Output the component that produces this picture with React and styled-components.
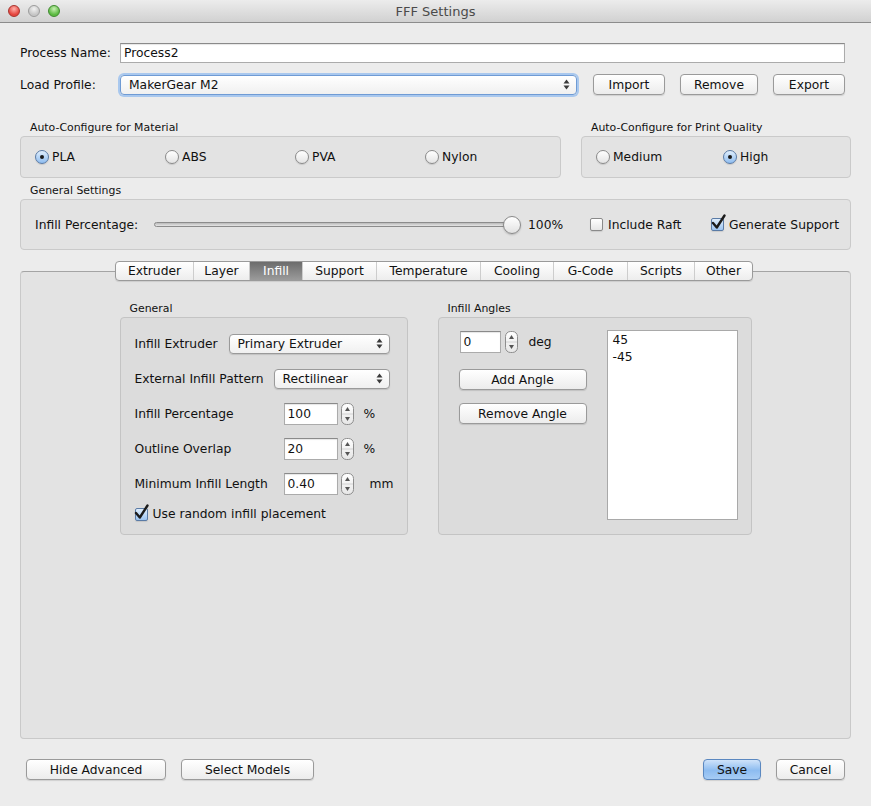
import styled, { createGlobalStyle } from 'styled-components';

const GlobalStyle = createGlobalStyle`
  html, body {
    margin: 0;
    padding: 0;
    background: #ececec;
  }
  body {
    font-family: "DejaVu Sans", "Noto Sans", sans-serif;
    font-size: 12.3px;
    color: #111;
  }
  * {
    box-sizing: border-box;
  }
`;

const materials = ['PLA', 'ABS', 'PVA', 'Nylon'];
const qualities = ['Medium', 'High'];
const tabs = [
  ['Extruder', 77],
  ['Layer', 56],
  ['Infill', 53],
  ['Support', 74],
  ['Temperature', 104],
  ['Cooling', 73],
  ['G-Code', 74],
  ['Scripts', 67],
  ['Other', 58],
];

const PopArrows = () => (
  <svg width="7" height="11" viewBox="0 0 7 11">
    <polygon points="0.5,4.5 3.5,0.5 6.5,4.5" fill="#3a3a3a" />
    <polygon points="0.5,6.5 3.5,10.5 6.5,6.5" fill="#3a3a3a" />
  </svg>
);

const StepperIcon = () => (
  <svg width="13" height="22" viewBox="0 0 13 22">
    <defs>
      <linearGradient id="stp" x1="0" y1="0" x2="0" y2="1">
        <stop offset="0" stopColor="#ffffff" />
        <stop offset="1" stopColor="#e6e6e6" />
      </linearGradient>
    </defs>
    <rect x="0.5" y="0.5" width="12" height="21" rx="5" fill="url(#stp)" stroke="#8e8e8e" />
    <line x1="1" y1="11" x2="12" y2="11" stroke="#d2d2d2" />
    <polygon points="4,8 6.5,4 9,8" fill="#555" />
    <polygon points="4,14 6.5,18 9,14" fill="#555" />
  </svg>
);

const CheckMark = () => (
  <svg width="18" height="18" viewBox="0 0 18 18">
    <path d="M3 9 L6.8 13.5 L14.5 1.5" fill="none" stroke="#1b1b1b" strokeWidth="2.4" strokeLinecap="round" strokeLinejoin="round" />
  </svg>
);

const Window = styled.div`
  width: 871px;
  height: 806px;
  background: #ececec;
  display: flex;
  flex-direction: column;
  overflow: hidden;
`;

const TitleBar = styled.div`
  height: 23px;
  display: grid;
  grid-template-columns: 1fr auto 1fr;
  align-items: center;
  background: linear-gradient(#ececec, #d1d1d1);
  border-bottom: 1px solid #8c8c8c;
`;

const Lights = styled.div`
  display: flex;
  gap: 8px;
  padding-left: 8px;
`;

const lightColors = {
  red: ['#ffb1aa', '#e5463f', '#a8322c'],
  gray: ['#f2f2f2', '#c6c6c6', '#9c9c9c'],
  green: ['#c9f0b4', '#5dbb43', '#3e8a2e'],
};

const Light = styled.span`
  width: 12px;
  height: 12px;
  border-radius: 50%;
  background: radial-gradient(circle at 50% 30%, ${p => lightColors[p.$c][0]}, ${p => lightColors[p.$c][1]} 65%);
  border: 1px solid ${p => lightColors[p.$c][2]};
`;

const Title = styled.div`
  font-size: 13px;
  color: #4a4a4a;
`;

const Body = styled.div`
  flex: 1;
  display: flex;
  flex-direction: column;
  padding: 0 20px;
`;

const FieldRow = styled.div`
  display: flex;
  align-items: center;
  height: ${p => p.$h}px;
  margin-top: ${p => p.$top}px;
  margin-right: 6px;
`;

const FieldLabel = styled.div`
  width: 100px;
  flex-shrink: 0;
`;

const TextField = styled.div`
  flex: ${p => (p.$w ? 'none' : 1)};
  width: ${p => (p.$w ? `${p.$w}px` : 'auto')};
  height: ${p => p.$h || 20}px;
  background: #fff;
  border: 1px solid #ababab;
  border-top-color: #8a8a8a;
  box-shadow: inset 0 1px 1px rgba(0, 0, 0, 0.1);
  padding: 0 3px;
  display: flex;
  align-items: center;
`;

const PopUp = styled.div`
  width: ${p => p.$w}px;
  height: 20px;
  flex-shrink: 0;
  display: flex;
  align-items: center;
  justify-content: space-between;
  padding: 0 6px 0 8px;
  border-radius: 4px;
  background: linear-gradient(#ffffff, #f0f0f0);
  border: 1px solid ${p => (p.$focused ? '#6f9bd4' : '#9a9a9a')};
  box-shadow: ${p => (p.$focused ? '0 0 0 2px #a9c8ee' : '0 1px 1px rgba(0, 0, 0, 0.12)')};
`;

const ButtonGroup = styled.div`
  display: flex;
  gap: 15px;
  margin-left: ${p => p.$left || 0}px;
`;

const PushButton = styled.div`
  width: ${p => p.$w}px;
  height: 21px;
  flex-shrink: 0;
  display: flex;
  align-items: center;
  justify-content: center;
  border-radius: 4px;
  border: 1px solid ${p => (p.$primary ? '#5b88c0' : '#9a9a9a')};
  background: ${p => (p.$primary ? 'linear-gradient(#cfe3fa, #8dbcf0 55%, #a6ccf5)' : 'linear-gradient(#ffffff, #ececec)')};
  box-shadow: 0 1px 1px rgba(0, 0, 0, 0.12);
`;

const GroupLabel = styled.div`
  font-size: 10.9px;
  line-height: 14px;
  padding-left: 10px;
  margin-top: ${p => p.$top || 0}px;
  margin-bottom: 1px;
`;

const GroupsRow = styled.div`
  display: flex;
  gap: 20px;
`;

const Group = styled.div`
  display: flex;
  flex-direction: column;
  width: ${p => (p.$w ? `${p.$w}px` : 'auto')};
  flex: ${p => (p.$w ? 'none' : 1)};
`;

const GroupBox = styled.div`
  height: ${p => p.$h}px;
  background: #e3e3e3;
  border: 1px solid #cacaca;
  border-radius: 4px;
  display: flex;
  align-items: center;
  padding-left: 14px;
`;

const RadioSet = styled.div`
  display: grid;
  grid-template-columns: repeat(${p => p.$n}, ${p => p.$step}px);
`;

const Choice = styled.div`
  display: flex;
  align-items: center;
  gap: ${p => p.$gap || 3}px;
  width: ${p => (p.$w ? `${p.$w}px` : 'auto')};
`;

const Radio = styled.span`
  width: 14px;
  height: 14px;
  border-radius: 50%;
  display: flex;
  align-items: center;
  justify-content: center;
  border: 1px solid ${p => (p.$on ? '#5a7ba6' : '#8a8a8a')};
  background: ${p => (p.$on ? 'linear-gradient(#e0eefc, #8fbdf0)' : 'linear-gradient(#ffffff, #e4e4e4)')};
  box-shadow: 0 1px 1px rgba(0, 0, 0, 0.12);
  &::after {
    content: '';
    width: 4px;
    height: 4px;
    border-radius: 50%;
    background: ${p => (p.$on ? '#1a1a1a' : 'transparent')};
  }
`;

const CheckBox = styled.span`
  width: 13px;
  height: 13px;
  flex-shrink: 0;
  border-radius: 2px;
  border: 1px solid ${p => (p.$on ? '#5a7ba6' : '#8a8a8a')};
  background: ${p => (p.$on ? 'linear-gradient(#e0eefc, #9cc4f1)' : 'linear-gradient(#ffffff, #e6e6e6)')};
  box-shadow: 0 1px 1px rgba(0, 0, 0, 0.1);
  display: flex;
  align-items: flex-end;
  justify-content: center;
  overflow: visible;
  svg {
    margin-bottom: -2px;
    margin-left: 2px;
    flex-shrink: 0;
  }
`;

const SliderLabel = styled.div`
  width: 119px;
  flex-shrink: 0;
`;

const Slider = styled.div`
  width: 367px;
  display: flex;
  align-items: center;
`;

const SliderTrack = styled.div`
  flex: 1;
  height: 5px;
  border-radius: 3px;
  border: 1px solid #8c8c8c;
  background: linear-gradient(#b9b9b9, #e6e6e6);
`;

const SliderThumb = styled.div`
  width: 18px;
  height: 18px;
  margin-left: -12px;
  border-radius: 50%;
  border: 1px solid #8a8a8a;
  background: linear-gradient(#ffffff, #e2e2e2);
  box-shadow: 0 1px 2px rgba(0, 0, 0, 0.2);
`;

const SliderValue = styled.div`
  width: 62px;
  margin-left: 7px;
`;

const TabArea = styled.div`
  margin-top: 11px;
  display: flex;
  flex-direction: column;
`;

const TabBar = styled.div`
  align-self: center;
  display: flex;
  height: 20px;
  margin-bottom: -10px;
  margin-left: -3px;
  position: relative;
  z-index: 1;
  border: 1px solid #9a9a9a;
  border-radius: 4px;
  background: linear-gradient(#ffffff, #ededed);
  overflow: hidden;
  box-shadow: 0 1px 1px rgba(0, 0, 0, 0.1);
`;

const Tab = styled.div`
  width: ${p => p.$w}px;
  text-align: center;
  line-height: 18px;
  border-left: 1px solid #cdcdcd;
  color: ${p => (p.$active ? '#fff' : '#111')};
  background: ${p => (p.$active ? 'linear-gradient(#6c6c6c, #9b9b9b)' : 'transparent')};
  &:first-child {
    border-left: none;
  }
`;

const TabPanel = styled.div`
  height: 468px;
  background: #e3e3e3;
  border: 1px solid #c9c9c9;
  border-top-color: #a4a4a4;
  border-radius: 4px;
  padding-top: 30px;
  display: flex;
  justify-content: center;
  align-items: flex-start;
  gap: 30px;
`;

const InnerBox = styled.div`
  width: ${p => p.$w}px;
  height: 218px;
  background: #dcdcdc;
  border: 1px solid #c4c4c4;
  border-radius: 4px;
  display: flex;
  flex-direction: ${p => p.$dir || 'column'};
  padding: ${p => p.$pad};
`;

const FormRow = styled.div`
  height: ${p => p.$h || 35}px;
  display: flex;
  align-items: center;
`;

const FormLabel = styled.div`
  width: ${p => p.$w}px;
  flex-shrink: 0;
`;

const StepperWrap = styled.span`
  display: flex;
  margin-left: ${p => p.$gap || 3}px;
`;

const Unit = styled.span`
  margin-left: ${p => p.$gap}px;
`;

const AngleColumn = styled.div`
  width: 128px;
  display: flex;
  flex-direction: column;
`;

const AngleInputRow = styled.div`
  display: flex;
  align-items: center;
  height: 22px;
  margin-top: 1px;
  margin-left: 1px;
`;

const Spaced = styled.div`
  margin-top: ${p => p.$top}px;
`;

const ListBox = styled.div`
  width: 131px;
  height: 190px;
  margin-left: auto;
  background: #fff;
  border: 1px solid #a9a9a9;
  padding: 1px 5px;
`;

const ListItem = styled.div`
  line-height: 17px;
`;

const Footer = styled.div`
  margin-top: 20px;
  display: flex;
  justify-content: space-between;
  padding: 0 6px;
`;

const NumberRow = ({ label, value, unit, gap }) => (
  <FormRow>
    <FormLabel $w={149}>{label}</FormLabel>
    <TextField $w={54} $h={22}>{value}</TextField>
    <StepperWrap>
      <StepperIcon />
    </StepperWrap>
    <Unit $gap={gap}>{unit}</Unit>
  </FormRow>
);

const Check = ({ on, label, w }) => (
  <Choice $gap={5} $w={w}>
    <CheckBox $on={on}>{on && <CheckMark />}</CheckBox>
    {label}
  </Choice>
);

export default function App() {
  return (
    <Window>
      <GlobalStyle />
      <TitleBar>
        <Lights>
          <Light $c="red" />
          <Light $c="gray" />
          <Light $c="green" />
        </Lights>
        <Title>FFF Settings</Title>
        <span />
      </TitleBar>
      <Body>
        <FieldRow $top={20} $h={20}>
          <FieldLabel>Process Name:</FieldLabel>
          <TextField>Process2</TextField>
        </FieldRow>
        <FieldRow $top={11} $h={21}>
          <FieldLabel>Load Profile:</FieldLabel>
          <PopUp $w={457} $focused>
            <span>MakerGear M2</span>
            <PopArrows />
          </PopUp>
          <ButtonGroup $left={16}>
            <PushButton $w={72}>Import</PushButton>
            <PushButton $w={78}>Remove</PushButton>
            <PushButton $w={72}>Export</PushButton>
          </ButtonGroup>
        </FieldRow>

        <GroupsRow>
          <Group $w={541}>
            <GroupLabel $top={26}>Auto-Configure for Material</GroupLabel>
            <GroupBox $h={42}>
              <RadioSet $n={4} $step={130}>
                {materials.map((m, i) => (
                  <Choice key={m}>
                    <Radio $on={i === 0} />
                    {m}
                  </Choice>
                ))}
              </RadioSet>
            </GroupBox>
          </Group>
          <Group>
            <GroupLabel $top={26}>Auto-Configure for Print Quality</GroupLabel>
            <GroupBox $h={42}>
              <RadioSet $n={2} $step={127}>
                {qualities.map((q, i) => (
                  <Choice key={q}>
                    <Radio $on={i === 1} />
                    {q}
                  </Choice>
                ))}
              </RadioSet>
            </GroupBox>
          </Group>
        </GroupsRow>

        <GroupLabel $top={6}>General Settings</GroupLabel>
        <GroupBox $h={51}>
          <SliderLabel>Infill Percentage:</SliderLabel>
          <Slider>
            <SliderTrack />
            <SliderThumb />
          </Slider>
          <SliderValue>100%</SliderValue>
          <Check label="Include Raft" w={121} />
          <Check on label="Generate Support" />
        </GroupBox>

        <TabArea>
          <TabBar>
            {tabs.map(([t, w]) => (
              <Tab key={t} $w={w} $active={t === 'Infill'}>
                {t}
              </Tab>
            ))}
          </TabBar>
          <TabPanel>
            <Group $w={288}>
              <GroupLabel>General</GroupLabel>
              <InnerBox $w={288} $pad="8px 0 0 14px">
                <FormRow>
                  <FormLabel $w={94}>Infill Extruder</FormLabel>
                  <PopUp $w={161}>
                    <span>Primary Extruder</span>
                    <PopArrows />
                  </PopUp>
                </FormRow>
                <FormRow>
                  <FormLabel $w={139}>External Infill Pattern</FormLabel>
                  <PopUp $w={116}>
                    <span>Rectilinear</span>
                    <PopArrows />
                  </PopUp>
                </FormRow>
                <NumberRow label="Infill Percentage" value="100" unit="%" gap={10} />
                <NumberRow label="Outline Overlap" value="20" unit="%" gap={10} />
                <NumberRow label="Minimum Infill Length" value="0.40" unit="mm" gap={16} />
                <FormRow $h={26}>
                  <Check on label="Use random infill placement" />
                </FormRow>
              </InnerBox>
            </Group>
            <Group $w={314}>
              <GroupLabel>Infill Angles</GroupLabel>
              <InnerBox $w={314} $dir="row" $pad="12px 13px 0 20px">
                <AngleColumn>
                  <AngleInputRow>
                    <TextField $w={41} $h={22}>0</TextField>
                    <StepperWrap $gap={4}>
                      <StepperIcon />
                    </StepperWrap>
                    <Unit $gap={11}>deg</Unit>
                  </AngleInputRow>
                  <Spaced $top={16}>
                    <PushButton $w={128}>Add Angle</PushButton>
                  </Spaced>
                  <Spaced $top={13}>
                    <PushButton $w={128}>Remove Angle</PushButton>
                  </Spaced>
                </AngleColumn>
                <ListBox>
                  <ListItem>45</ListItem>
                  <ListItem>-45</ListItem>
                </ListBox>
              </InnerBox>
            </Group>
          </TabPanel>
        </TabArea>

        <Footer>
          <ButtonGroup>
            <PushButton $w={140}>Hide Advanced</PushButton>
            <PushButton $w={133}>Select Models</PushButton>
          </ButtonGroup>
          <ButtonGroup>
            <PushButton $w={58} $primary>Save</PushButton>
            <PushButton $w={69}>Cancel</PushButton>
          </ButtonGroup>
        </Footer>
      </Body>
    </Window>
  );
}
